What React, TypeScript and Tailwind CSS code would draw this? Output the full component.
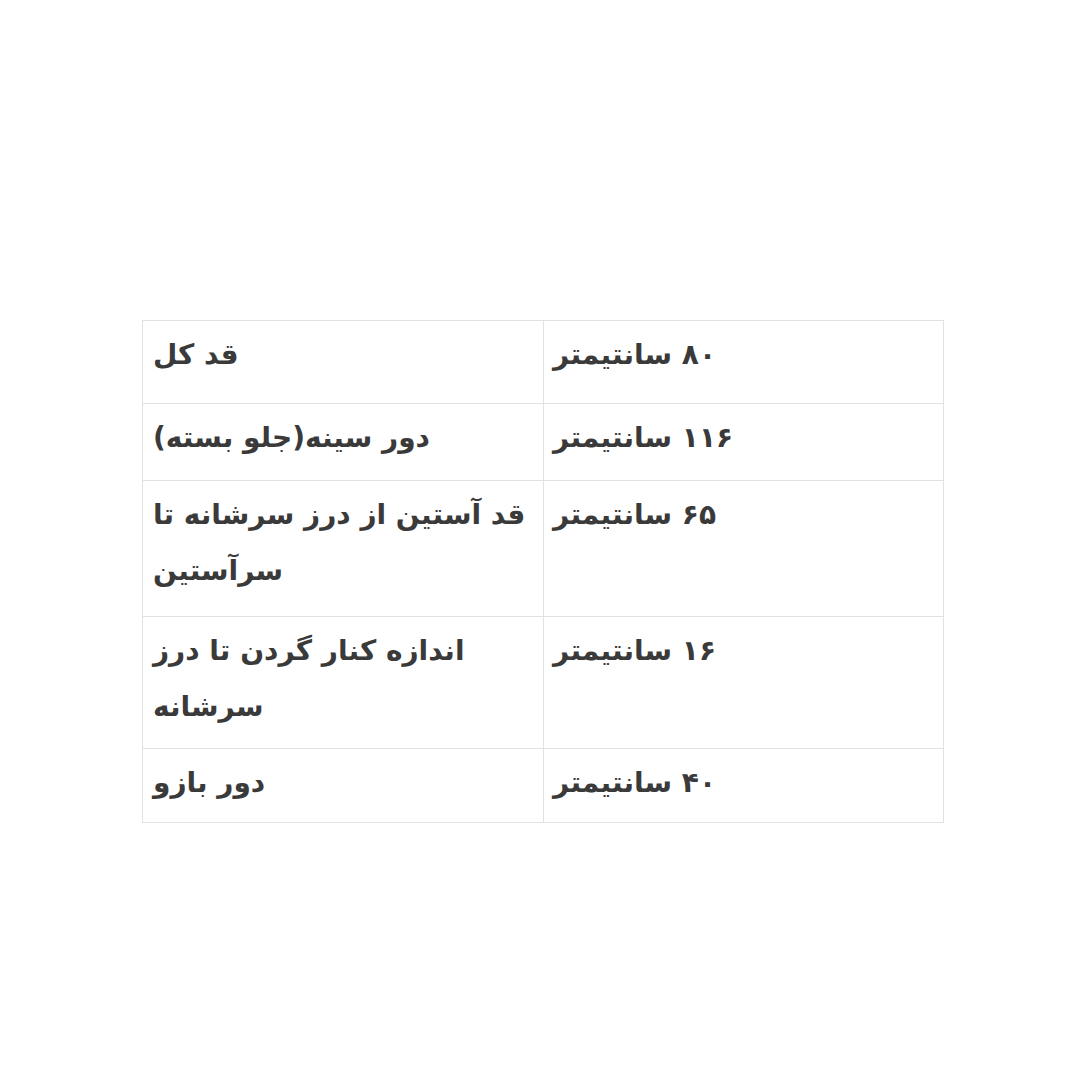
import React from "react";

const rows: { label: string; value: string; h: string }[] = [
  { label: "قد کل", value: "۸۰ سانتیمتر", h: "h-[83px]" },
  { label: "دور سینه(جلو بسته)", value: "۱۱۶ سانتیمتر", h: "h-[77px]" },
  { label: "قد آستین از درز سرشانه تا سرآستین", value: "۶۵ سانتیمتر", h: "h-[136px]" },
  { label: "اندازه کنار گردن تا درز سرشانه", value: "۱۶ سانتیمتر", h: "h-[132px]" },
  { label: "دور بازو", value: "۴۰ سانتیمتر", h: "h-[74px]" },
];

export default function App() {
  return (
    <div className="w-[1080px] h-[1080px] bg-white flex items-start justify-start">
      <div className="pt-[320px] pl-[142px]">
        <table
          className="border-collapse w-[801px] table-fixed text-[#3a3a3a] font-bold"
          style={{ fontFamily: '"DejaVu Sans", "Noto Sans", sans-serif' }}
        >
          <tbody>
            {rows.map((r, i) => (
              <tr key={i} className={r.h}>
                <td
                  dir="rtl"
                  className="w-[401px] border border-[#e2e2e2] align-top text-left px-[10px] pt-[6px] text-[28px] leading-[56px]"
                >
                  {r.label}
                </td>
                <td
                  dir="rtl"
                  className="w-[400px] border border-[#e2e2e2] align-top text-left px-[9px] pt-[6px] text-[28px] leading-[56px]"
                >
                  {r.value}
                </td>
              </tr>
            ))}
          </tbody>
        </table>
      </div>
    </div>
  );
}
